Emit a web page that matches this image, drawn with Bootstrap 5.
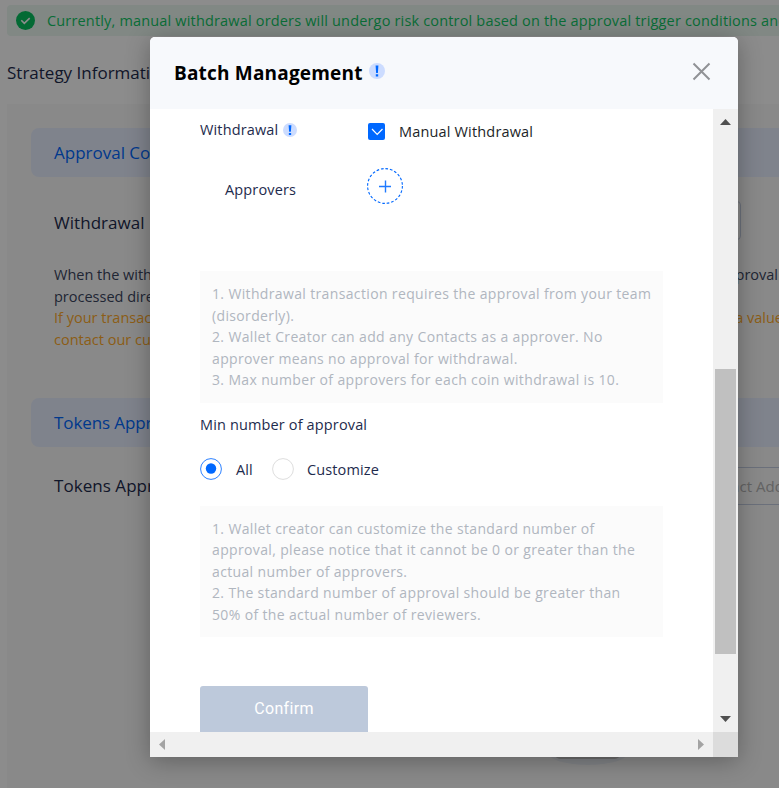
<!DOCTYPE html>
<html lang="en">
<head>
<meta charset="utf-8">
<meta name="viewport" content="width=device-width, initial-scale=1">
<title>Batch Management</title>
<link rel="stylesheet" href="https://cdn.jsdelivr.net/npm/bootstrap@5.3.0/dist/css/bootstrap.min.css">
<style>
html,body{height:788px;overflow:hidden}
body{font-family:"Open Sans","Noto Sans",sans-serif;font-size:14.5px;line-height:22px;letter-spacing:.14px;color:#1e2b4d;background:#fff}
svg{display:block;flex:none}

/* page behind the dialog */
.page{width:779px;height:788px;padding:5px 0 0 7px}
.notice{height:31px;background:#ebf7f1;color:#12c765;padding-left:9px;gap:12px;border-radius:4px 0 0 4px;letter-spacing:.17px}
.page-title{height:68px;font-size:17px;padding-top:6px;letter-spacing:0}
.panel{background:#fafafa;height:684px;padding:24px 0 0 24px}
.section-bar{height:49px;background:#e8efff;color:#0068ff;font-size:17px;padding-left:23px;border-radius:8px 0 0 8px;letter-spacing:0}
.section-bar.tokens{padding-top:1px;letter-spacing:-.1px}
.split-line{height:21.7px;padding-left:23px;padding-right:1px;letter-spacing:0;color:#3a4560}
.warn-line{color:#ffaa2b}
.warn-line .tail{margin-right:-5px}
.gap-below{margin-bottom:47px}
.field-row{padding-left:23px;font-size:17px;letter-spacing:.05px}
.row-tall{height:87px}
.row-tall span{padding-top:4px}
.row-short{height:78px}
.field-box{border:1px solid #c4cce0;border-radius:4px;height:39px;width:100px;margin-right:38px}
.field-open{border:1px solid #c4cce0;border-right:0;height:38px;width:94px;color:#b4b4b4;font-size:15px}
.field-open span{margin-right:-5px}
.under{margin-top:228px}
.chip{width:65px;height:6px;background:#c4c4c4;border-radius:0 0 5px 5px;margin-left:524px;position:relative;z-index:1}
.chip-shadow{width:84px;height:14px;margin:-8px 0 0 515px;background:#eceff5;border-radius:0 0 42px 42px/0 0 14px 14px}
.shade{position:absolute;inset:0;z-index:2;background:rgba(0,0,0,.45)}

/* dialog */
.dialog{position:absolute;z-index:3;left:150px;top:37px;width:588px;height:720px;border-radius:5px 5px 0 0;box-shadow:0 4px 24px rgba(0,0,0,.3);overflow:hidden}
.dialog-head{height:72px;background:#f7f9fc;padding:0 27px 0 24px;color:#000;gap:6px}
.dialog-head h1{font-size:19px;font-weight:700;margin:0;letter-spacing:.19px}
.view{width:563px;height:623px;overflow:hidden;padding:0 50px}
.form-line{height:45px}
.label-col{width:168px;gap:5px}
.approve-line{height:117px;padding-top:14px}
.approve-label{width:167px;padding:11px 0 0 25px}
.note{background:#fbfbfb;color:#b0b6bf;width:463px;height:131.5px;padding:12px;line-height:21.6px;font-size:14px;letter-spacing:.355px;white-space:nowrap}
.min-label{height:45px}
.radio-line{height:42px}
.label-all{margin:2px 19px 0 14px}
.label-custom{margin:2px 0 0 13px}
.manual{color:#1c1f28;letter-spacing:.17px;margin-left:14px}
.confirm{width:168px;height:48px;margin-top:48.5px;padding-bottom:3px;background:#bdc9db;color:#fff;border-radius:3px;font:16px Roboto,sans-serif;letter-spacing:.33px}
.vbar{width:25px;height:623px;background:#f0f0f0;padding:9px 0}
.thumb{width:21px;height:285px;margin-top:244px;background:#c0c0c0}
.hbar{height:25px;background:#f0f0f0;padding:0 8px}
.corner{width:25px;height:25px;background:#dcdcdc}
</style>
</head>
<body>
<div class="page overflow-hidden">
  <div class="notice d-flex align-items-center text-nowrap">
    <svg width="19" height="19" viewBox="0 0 19 19"><circle cx="9.5" cy="9.5" r="9.5" fill="#07c160"/><path d="M5.3 9.3l3 3 5.4-5.2" fill="none" stroke="#fff" stroke-width="1.6"/></svg>
    <span>Currently, manual withdrawal orders will undergo risk control based on the approval trigger conditions and</span>
  </div>
  <div class="page-title d-flex align-items-center">Strategy Information</div>
  <div class="panel">
    <div class="section-bar d-flex align-items-center">Approval Co</div>
    <div class="field-row row-tall d-flex justify-content-between align-items-center">
      <span>Withdrawal</span><div class="field-box"></div>
    </div>
    <div class="split-line d-flex justify-content-between"><span>When the with</span><span>proval</span></div>
    <div class="split-line">processed direc</div>
    <div class="split-line warn-line d-flex justify-content-between"><span>If your transac</span><span class="tail">a value</span></div>
    <div class="split-line warn-line gap-below">contact our cus</div>
    <div class="section-bar tokens d-flex align-items-center">Tokens Appr</div>
    <div class="field-row row-short d-flex justify-content-between align-items-center">
      <span>Tokens Appr</span><div class="field-open d-flex align-items-center justify-content-end overflow-hidden text-nowrap"><span>Contract Add</span></div>
    </div>
    <div class="under">
      <div class="chip"></div>
      <div class="chip-shadow"></div>
    </div>
  </div>
</div>
<div class="shade"></div>

<div class="dialog bg-white">
  <div class="dialog-head d-flex align-items-center">
    <h1>Batch Management</h1>
    <svg class="mb-1" width="16" height="16" viewBox="0 0 16 16"><circle cx="8" cy="8" r="8" fill="#ccdcff"/><path d="M6.600 2.500h2.800l-.5 7.500H7.100zM6.800 11.300h2.400v2.200H6.800z" fill="#0068ff"/></svg>
    <svg class="ms-auto mb-1" width="19" height="19" viewBox="0 0 19 19"><path d="M1.500 1.500l16 16M17.500 1.500l-16 16" stroke="#909295" stroke-width="2" fill="none"/></svg>
  </div>
  <div class="d-flex">
    <div class="view">
      <div class="form-line d-flex align-items-center">
        <div class="label-col d-flex align-items-center pb-1">Withdrawal
          <svg width="14" height="14" viewBox="0 0 16 16"><circle cx="8" cy="8" r="8" fill="#ccdcff"/><path d="M6.400 2.500h3.200l-.6 7.500H7zM6.700 11.300h2.600v2.300H6.700z" fill="#0068ff"/></svg>
        </div>
        <svg width="17" height="17" viewBox="0 0 17 17"><rect width="17" height="17" rx="2" fill="#0068ff"/><path d="M4 6l5.200 5.500L14.500 6" fill="none" stroke="#fff" stroke-width="1.200"/></svg>
        <span class="manual">Manual Withdrawal</span>
      </div>
      <div class="approve-line d-flex align-items-start">
        <div class="approve-label">Approvers</div>
        <svg width="36" height="36" viewBox="0 0 36 36"><circle cx="18" cy="18" r="17.400" fill="none" stroke="#0068ff" stroke-width="1.100" stroke-dasharray="2.700 1.850"/><path d="M12 18.500h12M18.500 12.500v12" stroke="#1f7aff" stroke-width="1.400"/></svg>
      </div>
      <div class="note">1. Withdrawal transaction requires the approval from your team<br>(disorderly).<br>2. Wallet Creator can add any Contacts as a approver. No<br>approver means no approval for withdrawal.<br>3. Max number of approvers for each coin withdrawal is 10.</div>
      <div class="min-label d-flex align-items-center">Min number of approval</div>
      <div class="radio-line d-flex align-items-center">
        <svg width="22" height="22" viewBox="0 0 22 22"><circle cx="11" cy="11" r="10.400" fill="none" stroke="#2e82ff"/><circle cx="11" cy="10.500" r="5.200" fill="#0068ff"/></svg>
        <span class="label-all">All</span>
        <svg width="22" height="22" viewBox="0 0 22 22"><circle cx="11" cy="11" r="10.400" fill="none" stroke="#dedede"/></svg>
        <span class="label-custom">Customize</span>
      </div>
      <div class="note mt-3">1. Wallet creator can customize the standard number of<br>approval, please notice that it cannot be 0 or greater than the<br>actual number of approvers.<br>2. The standard number of approval should be greater than<br>50% of the actual number of reviewers.</div>
      <button class="confirm border-0">Confirm</button>
    </div>
    <div class="vbar d-flex flex-column align-items-center">
      <svg width="11" height="7" viewBox="0 0 11 7"><path d="M0 7L5.500 1 11 7z" fill="#505050"/></svg>
      <div class="thumb"></div>
      <svg class="mt-auto" width="11" height="7" viewBox="0 0 11 7"><path d="M0 0h11L5.500 6z" fill="#505050"/></svg>
    </div>
  </div>
  <div class="d-flex">
    <div class="hbar flex-grow-1 d-flex align-items-center justify-content-between">
      <svg width="7" height="11" viewBox="0 0 7 11"><path d="M7 0v11L1 5.500z" fill="#a3a3a3"/></svg>
      <svg width="7" height="11" viewBox="0 0 7 11"><path d="M0 0v11l6-5.500z" fill="#a3a3a3"/></svg>
    </div>
    <div class="corner"></div>
  </div>
</div>
<script src="https://cdn.jsdelivr.net/npm/bootstrap@5.3.0/dist/js/bootstrap.bundle.min.js"></script>
</body>
</html>
